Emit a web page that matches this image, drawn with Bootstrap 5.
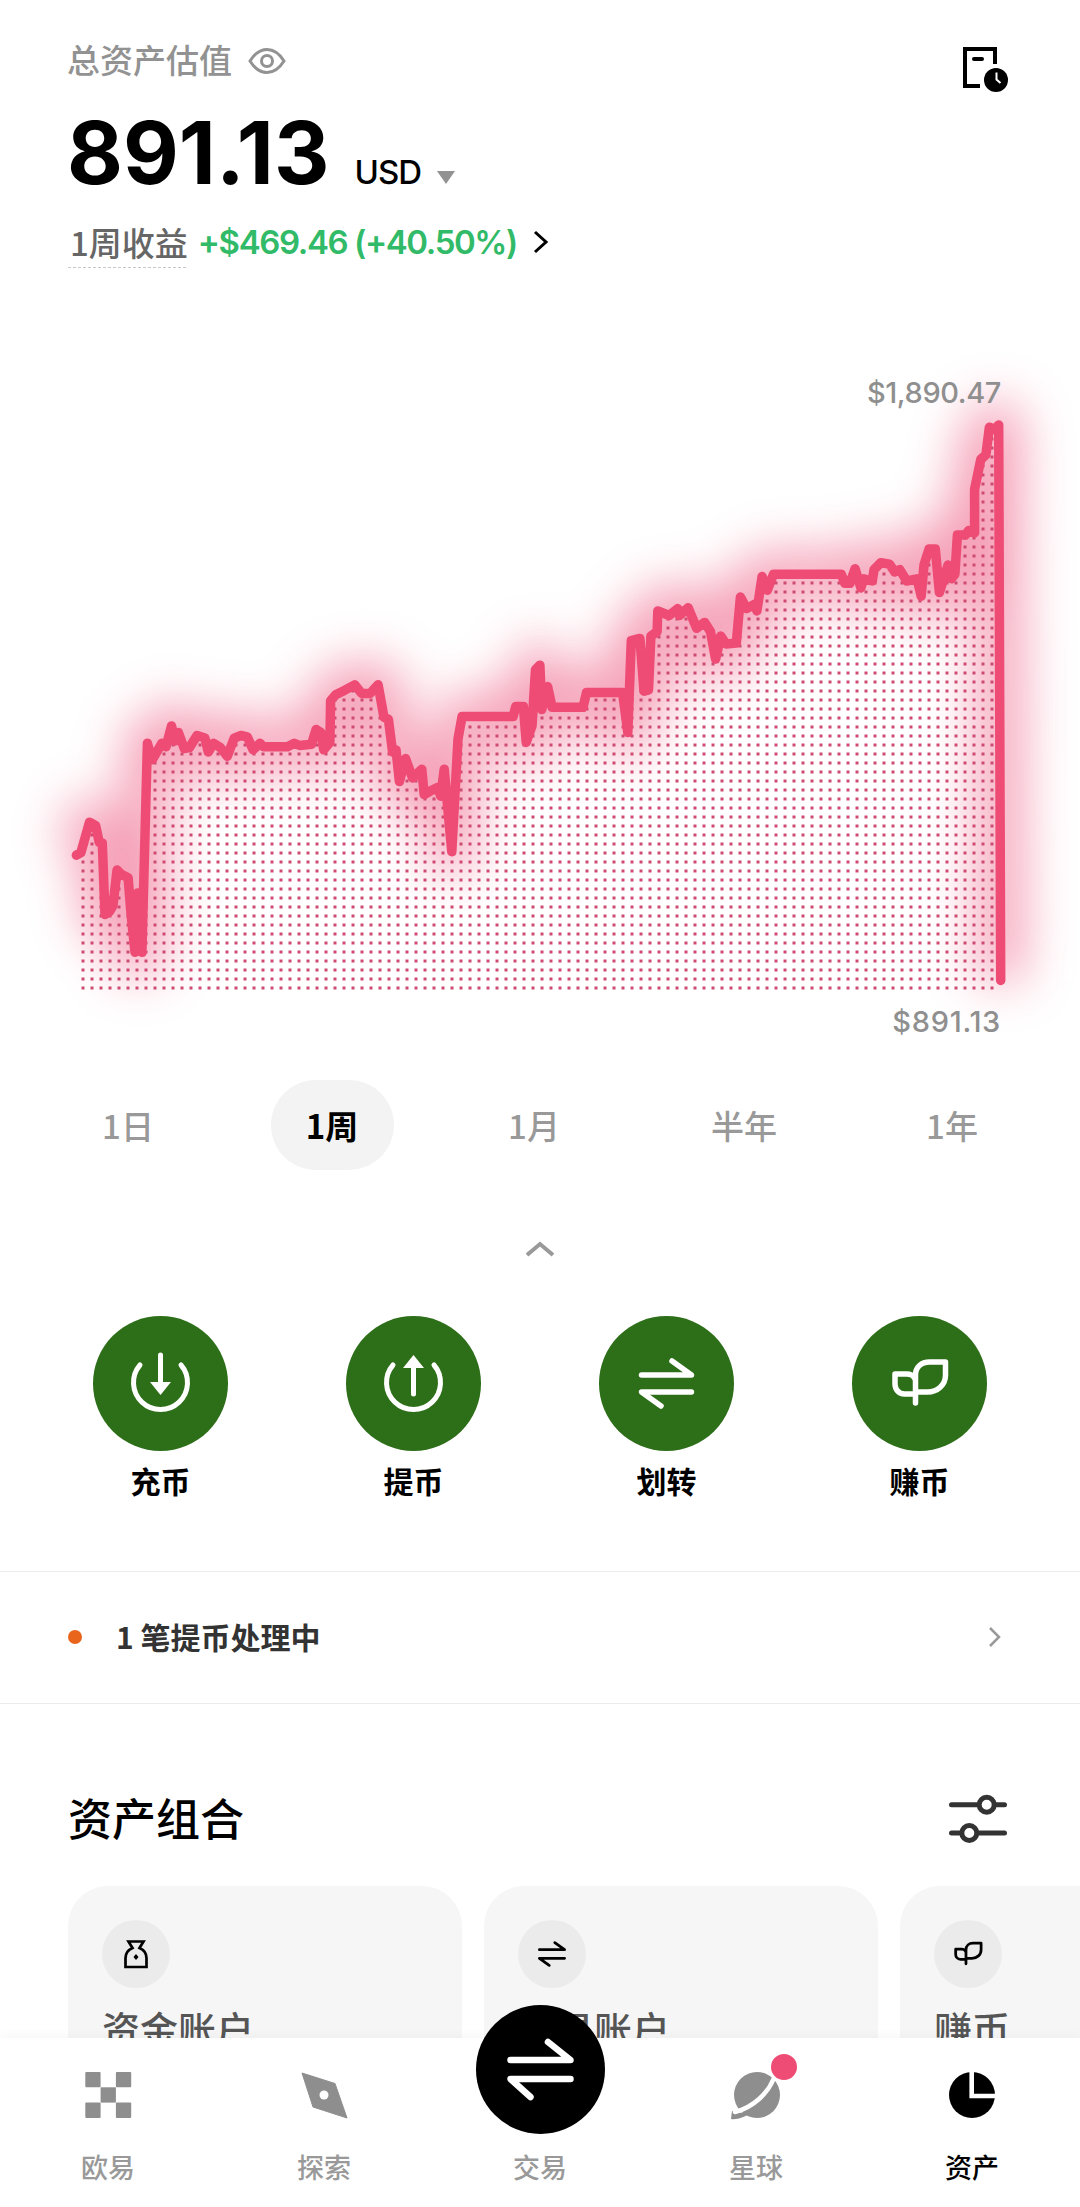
<!DOCTYPE html>
<html lang="zh-CN">
<head>
  <meta charset="UTF-8">
  <meta name="viewport" content="width=device-width, initial-scale=1">
  <title>资产</title>
  <link href="https://cdn.jsdelivr.net/npm/bootstrap@5.3.3/dist/css/bootstrap.min.css" rel="stylesheet">
  <style>
    html, body { background: #fff; }
    body { font-family: Inter, "Noto Sans CJK SC", sans-serif; color: #000; width: 1080px; }
    .screen { width: 1080px; height: 2207px; overflow: hidden; }
    .top-box { padding: 39px 70px 0; height: 275px; }
    .est-label { font-size: 33px; line-height: 44px; font-weight: 500; color: #929292; margin-left: -3px; }
    .hist-ico { margin-top: 6px; }
    .amount-row { margin-top: 17px; height: 82px; }
    .amount { font-size: 86px; line-height: 82px; font-weight: 700; margin-left: -3px; }
    .unit { font-size: 33px; line-height: 36px; font-weight: 500; margin-left: 25px; letter-spacing: -1px; }
    .pnl-row { margin-top: 25px; height: 46px; font-size: 33px; line-height: 46px; }
    .pnl-label { font-family: "Noto Sans CJK SC", sans-serif; font-weight: 500; color: #666; position: relative; }
    .pnl-label::after { content: ""; position: absolute; left: -2px; right: 2px; bottom: -3px; border-bottom: 1px dashed #c8c8c8; }
    .pnl-val { color: #31ba68; font-weight: 600; margin-left: 10px; letter-spacing: -1.4px; }
    .chart-box { height: 805px; }
    .chart-box svg { display: block; }
    .chart-tag { position: absolute; right: 79px; font-size: 29px; line-height: 36px; font-weight: 500; color: #8f8f8f; }
    .tag-hi { top: 100px; letter-spacing: -.4px; }
    .tag-lo { top: 729px; letter-spacing: .7px; }
    .range-row { display: grid; grid-template-columns: 204px 204px 200px 220px 196px; padding-left: 26px; height: 90px; }
    .range-item { font-family: "Noto Sans CJK SC", sans-serif; font-size: 33px; line-height: 90px; font-weight: 500; color: #999; text-align: center; }
    .range-on { width: 123px; background: #f3f3f3; color: #000; font-weight: 700; margin: 0 auto; }
    .fold-row { height: 146px; padding-top: 71px; }
    .action-row { display: grid; grid-template-columns: repeat(4, 253px); padding: 0 34px; }
    .action-disc { width: 135px; height: 135px; background: #2d6e18; color: #fff; }
    .action-name { font-size: 30px; line-height: 40px; font-weight: 700; margin-top: 11px; }
    .pending-row { margin-top: 69px; height: 133px; padding: 0 78px 2px 68px; border-top: 1px solid #ececec; border-bottom: 1px solid #ececec; }
    .pending-dot { width: 14px; height: 14px; background: #e9651c; }
    .pending-text { font-family: "Noto Sans CJK SC", sans-serif; font-size: 30px; font-weight: 700; color: #333; margin-left: 34px; }
    .folio-head { padding: 0 72px 0 68px; height: 62px; margin-top: 85px; }
    .folio-title { font-size: 44px; line-height: 62px; font-weight: 500; }
    .folio-row { margin-top: 35px; padding-left: 68px; gap: 22px; }
    .folio-card { flex: 0 0 394px; height: 300px; padding: 34px; background: #f6f6f6; border-radius: 40px; }
    .folio-ico { width: 68px; height: 68px; background: #ebebeb; color: #000; }
    .folio-name { font-size: 38px; line-height: 54px; font-weight: 500; color: #555; margin-top: 15px; }
    .tabbar { position: absolute; left: 0; right: 0; top: 2038px; height: 169px; background: #fff; box-shadow: 0 -3px 10px rgba(0, 0, 0, .035); }
    .tab-item { width: 216px; padding-top: 27px; color: #8e8e8e; }
    .tab-label { font-size: 27px; line-height: 36px; font-weight: 500; margin-top: 26px; color: #999; }
    .tab-on, .tab-on .tab-label { color: #000; }
    .trade-btn { position: absolute; left: 475.5px; top: 2005px; width: 129px; height: 129px; background: #000; color: #fff; }
    .red-pip { position: absolute; left: 768px; top: 2051px; width: 32px; height: 32px; background: #ee4c75; border: 3px solid #fff; }
  </style>
</head>
<body>
<svg width="0" height="0" class="position-absolute">
  <symbol id="ico-swap" viewBox="0 0 135 135">
    <path d="M42.5 59H92.5L73 45M92.5 76H42.5L62 90" fill="none" stroke="currentColor" stroke-width="5.500" stroke-linecap="round" stroke-linejoin="round"/>
  </symbol>
  <symbol id="ico-leaf" viewBox="0 0 135 135">
    <g transform="translate(8.5 24)" fill="none" stroke="currentColor" stroke-width="5.500" stroke-linecap="round" stroke-linejoin="round">
      <path d="M55 63V35C55 27 61 22 69 22H85V35C85 45 77 52 67 52H55"/>
      <path d="M54 54H44C38 54 34.5 49 34.5 44V34H46C50 34 53 36 54 38"/>
    </g>
  </symbol>
</svg>

<div class="screen position-relative">
  <div class="top-box">
    <div class="d-flex justify-content-between align-items-start">
      <div class="d-flex align-items-center est-label">
        <span>总资产估值</span>
        <svg class="ms-3" width="38" height="28" viewBox="0 0 38 28" fill="none" stroke="#929292" stroke-width="3">
          <path d="M2 14C7 6 12 2.500 19 2.500S31 6 36 14C31 22 26 25.500 19 25.500S7 22 2 14Z"/>
          <circle cx="19" cy="14" r="5.500"/>
        </svg>
      </div>
      <svg class="hist-ico" width="50" height="50" viewBox="960 45 50 50">
        <path d="M995 64V49H965V86H980" fill="none" stroke="#000" stroke-width="4"/>
        <path d="M974 59H982" stroke="#000" stroke-width="4" stroke-linecap="round"/>
        <circle cx="996" cy="80" r="12" fill="#000"/>
        <path d="M996.500 72.500V79.500L1000.500 83" fill="none" stroke="#fff" stroke-width="2"/>
      </svg>
    </div>
    <div class="d-flex align-items-baseline amount-row">
      <span class="amount">891.13</span>
      <span class="unit">USD</span>
      <svg class="ms-3 mb-2" width="18" height="13" viewBox="0 0 18 13"><path d="M0 0H18L9 13Z" fill="#929292"/></svg>
    </div>
    <div class="d-flex align-items-center pnl-row">
      <span class="pnl-label">1周收益</span>
      <span class="pnl-val">+$469.46 (+40.50%)</span>
      <svg class="ms-3" width="16" height="24" viewBox="0 0 16 24"><path d="M2 2L13 12L2 22" fill="none" stroke="#000" stroke-width="3"/></svg>
    </div>
  </div>

  <div class="chart-box position-relative">
    <svg id="trend" width="1080" height="785" viewBox="0 275 1080 785">
      <defs>
        <pattern id="dotgrid" patternUnits="userSpaceOnUse" x="81.500" y="752.500" width="9" height="9">
          <rect width="3" height="3" fill="#cf4a70"/>
        </pattern>
        <filter id="halo" filterUnits="userSpaceOnUse" x="0" y="275" width="1080" height="785">
          <feGaussianBlur stdDeviation="25"/>
        </filter>
        <clipPath id="under"><polygon id="underShape"/></clipPath>
      </defs>
      <path id="glowLine" fill="none" stroke="#ee5f86" stroke-width="46" stroke-linejoin="round" opacity=".6" filter="url(#halo)"/>
      <rect x="81" y="300" width="915" height="690" fill="url(#dotgrid)" clip-path="url(#under)"/>
      <path id="mainLine" fill="none" stroke="#ee4c75" stroke-width="9.500" stroke-linejoin="round" stroke-linecap="round"/>
    </svg>
    <span class="chart-tag tag-hi">$1,890.47</span>
    <span class="chart-tag tag-lo">$891.13</span>
  </div>

  <div class="range-row">
    <div class="range-item">1日</div>
    <div class="range-item range-on rounded-pill">1周</div>
    <div class="range-item">1月</div>
    <div class="range-item">半年</div>
    <div class="range-item">1年</div>
  </div>

  <div class="fold-row d-flex justify-content-center align-items-start">
    <svg width="32" height="16" viewBox="0 0 32 16"><path d="M3 14L16 3L29 14" fill="none" stroke="#999" stroke-width="4"/></svg>
  </div>

  <div class="action-row text-center">
    <div class="d-flex flex-column align-items-center">
      <div class="action-disc rounded-circle">
        <svg width="135" height="135" viewBox="0 0 135 135" fill="none" stroke="#fff" stroke-width="5" stroke-linecap="round">
          <path d="M47 49A27 27 0 1 0 88 49"/>
          <path d="M67.500 39V70"/>
          <path d="M57 66H78L67.500 79Z" fill="#fff" stroke="none"/>
        </svg>
      </div>
      <div class="action-name">充币</div>
    </div>
    <div class="d-flex flex-column align-items-center">
      <div class="action-disc rounded-circle">
        <svg width="135" height="135" viewBox="0 0 135 135" fill="none" stroke="#fff" stroke-width="5" stroke-linecap="round">
          <path d="M47 49A27 27 0 1 0 88 49"/>
          <path d="M67.500 50V78"/>
          <path d="M57 52H78L67.500 39Z" fill="#fff" stroke="none"/>
        </svg>
      </div>
      <div class="action-name">提币</div>
    </div>
    <div class="d-flex flex-column align-items-center">
      <div class="action-disc rounded-circle">
        <svg width="135" height="135"><use href="#ico-swap"/></svg>
      </div>
      <div class="action-name">划转</div>
    </div>
    <div class="d-flex flex-column align-items-center">
      <div class="action-disc rounded-circle">
        <svg width="135" height="135"><use href="#ico-leaf"/></svg>
      </div>
      <div class="action-name">赚币</div>
    </div>
  </div>

  <div class="pending-row d-flex align-items-center">
    <span class="pending-dot rounded-circle"></span>
    <span class="pending-text flex-grow-1">1 笔提币处理中</span>
    <svg width="14" height="22" viewBox="0 0 14 22"><path d="M2 2L11 11L2 20" fill="none" stroke="#999" stroke-width="2.500"/></svg>
  </div>

  <div class="folio-head d-flex justify-content-between align-items-center">
    <span class="folio-title">资产组合</span>
    <svg width="60" height="52" viewBox="948 1792 60 52" fill="none" stroke="#333">
      <path d="M951.500 1802.700H1004.500M951.500 1831H1004.500" stroke-width="5" stroke-linecap="round"/>
      <circle cx="986.700" cy="1802.700" r="7.500" fill="#fff" stroke-width="5"/>
      <circle cx="969.300" cy="1831" r="7.500" fill="#fff" stroke-width="5"/>
    </svg>
  </div>

  <div class="folio-row d-flex">
    <div class="folio-card">
      <div class="folio-ico rounded-circle">
        <svg width="68" height="68" viewBox="0 0 68 68">
          <path d="M26.500 21.500H41.500L37.500 28C42 30 44.500 34 44.500 38V47H23.500V38C23.500 34 26 30 30.500 28Z" fill="none" stroke="#000" stroke-width="2.700"/>
          <path d="M34 34L36.500 37L34 40L31.500 37Z" fill="#000"/>
        </svg>
      </div>
      <div class="folio-name">资金账户</div>
    </div>
    <div class="folio-card">
      <div class="folio-ico rounded-circle"><svg width="68" height="68"><use href="#ico-swap"/></svg></div>
      <div class="folio-name">交易账户</div>
    </div>
    <div class="folio-card">
      <div class="folio-ico rounded-circle"><svg width="68" height="68"><use href="#ico-leaf"/></svg></div>
      <div class="folio-name">赚币</div>
    </div>
  </div>

  <div class="tabbar d-flex">
    <div class="tab-item d-flex flex-column align-items-center">
      <svg width="60" height="60" viewBox="0 0 60 60" fill="currentColor">
        <rect x="7.300" y="7" width="15.300" height="15.300" rx="1"/><rect x="37.900" y="7" width="15.300" height="15.300" rx="1"/>
        <rect x="22.600" y="22.300" width="15.300" height="15.300"/>
        <rect x="7.300" y="37.600" width="15.300" height="15.300" rx="1"/><rect x="37.900" y="37.600" width="15.300" height="15.300" rx="1"/>
      </svg>
      <div class="tab-label">欧易</div>
    </div>
    <div class="tab-item d-flex flex-column align-items-center">
      <svg width="60" height="60" viewBox="0 0 60 60">
        <path d="M8 8L41 18.500L53 53L19 42Z" fill="currentColor" stroke="currentColor" stroke-linejoin="round"/>
        <circle cx="30" cy="30" r="4.500" fill="#fff"/>
      </svg>
      <div class="tab-label">探索</div>
    </div>
    <div class="tab-item d-flex flex-column align-items-center">
      <svg width="60" height="60" viewBox="0 0 60 60"></svg>
      <div class="tab-label">交易</div>
    </div>
    <div class="tab-item d-flex flex-column align-items-center">
      <svg width="60" height="60" viewBox="0 0 60 60">
        <circle cx="31" cy="30" r="23" fill="currentColor"/>
        <path d="M6 46L5 54C12 55 18 52 23 49Z" fill="currentColor"/>
        <path d="M48 13C42 28 28 42 9 47" fill="none" stroke="#fff" stroke-width="4.500" stroke-linecap="round"/>
      </svg>
      <div class="tab-label">星球</div>
    </div>
    <div class="tab-item tab-on d-flex flex-column align-items-center">
      <svg width="60" height="60" viewBox="0 0 60 60">
        <circle cx="30" cy="30" r="23" fill="#000"/>
        <path d="M29.700 4V31H56" fill="none" stroke="#fff" stroke-width="4.600"/>
      </svg>
      <div class="tab-label">资产</div>
    </div>
  </div>

  <div class="trade-btn rounded-circle">
    <svg width="129" height="129" viewBox="0 0 129 129">
      <path d="M34.500 55H94.500L72 37M94.500 74H34.500L54.500 92" fill="none" stroke="currentColor" stroke-width="6.500" stroke-linecap="round" stroke-linejoin="round"/>
    </svg>
  </div>
  <span class="red-pip rounded-circle"></span>
</div>

<script>
  // traced from the two halves of the chart, first one is (px/2.904, 340+py/2.306), second (540+px/2.904, 340+py/2.178)
  const leftPart = [[222,1188],[235,1182],[260,1112],[278,1120],[288,1158],[297,1160],[305,1325],[318,1318],[328,1305],[340,1222],[352,1232],[372,1240],[380,1320],[392,1412],[400,1275],[405,1275],[412,1412],[428,930],[442,968],[470,930],[482,938],[498,890],[508,925],[518,905],[535,942],[550,940],[572,912],[595,918],[605,950],[620,930],[640,940],[660,960],[680,918],[700,912],[718,915],[735,945],[755,930],[765,938],[835,938],[855,930],[870,935],[905,932],[918,898],[932,905],[940,945],[958,928],[960,832],[975,818],[1000,808],[1030,795],[1050,815],[1075,815],[1098,795],[1115,870],[1128,875],[1140,950],[1150,945],[1160,1018],[1178,965],[1198,1010],[1225,990],[1232,1048],[1250,1040],[1270,1032],[1280,1052],[1290,990],[1312,1180],[1330,920],[1342,868],[1490,868],[1498,845],[1520,845],[1528,928],[1545,890],[1555,760],[1568,750]];
  const rightPart = [[5,805],[22,755],[35,800],[125,800],[135,768],[240,768],[255,855],[265,655],[290,650],[302,765],[315,762],[322,645],[340,635],[342,590],[375,600],[400,585],[405,600],[430,583],[455,628],[478,615],[495,635],[510,695],[525,645],[540,662],[570,660],[582,560],[600,585],[625,575],[630,590],[645,515],[660,545],[678,510],[875,510],[885,530],[900,530],[915,498],[932,540],[940,520],[965,525],[970,500],[990,485],[1015,488],[1030,505],[1045,500],[1065,525],[1095,520],[1107,558],[1115,490],[1130,455],[1148,455],[1160,550],[1185,490],[1195,520],[1205,510],[1212,425],[1235,425],[1245,415],[1262,420],[1262,325],[1280,260],[1295,250],[1305,190],[1320,195],[1332,185],[1338,1395]];

  const pts = leftPart.map(p => [p[0] / 2.904, 340 + p[1] / 2.306])
    .concat(rightPart.map(p => [540 + p[0] / 2.904, 340 + p[1] / 2.178]))
    .map(p => p[0].toFixed(1) + " " + p[1].toFixed(1));

  const lineD = "M" + pts.join("L");
  document.getElementById("mainLine").setAttribute("d", lineD);
  document.getElementById("glowLine").setAttribute("d", lineD);
  document.getElementById("underShape").setAttribute("points", pts.join(",") + ",1001 995,76 995");
</script>
<script src="https://cdn.jsdelivr.net/npm/bootstrap@5.3.3/dist/js/bootstrap.bundle.min.js"></script>
</body>
</html>
